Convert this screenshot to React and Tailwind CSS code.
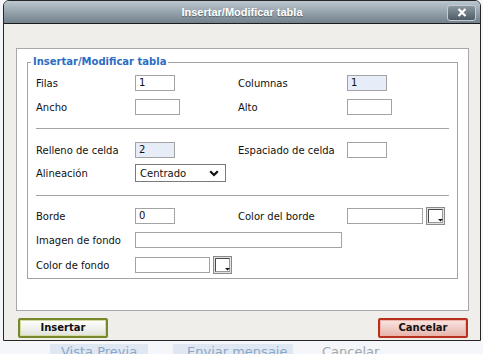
import React from 'react'

function Field({ w = 40, value = '', blue = false }) {
  return (
    <div
      className={
        'h-[16px] shrink-0 border border-[#a3a3a3] flex items-center pl-[3px] leading-none ' +
        (blue ? 'bg-[#e6edf9]' : 'bg-white')
      }
      style={{ width: w }}
    >
      {value}
    </div>
  )
}

function Picker() {
  return (
    <svg width="19" height="18" viewBox="0 0 19 18" className="ml-[3px] shrink-0">
      <rect x="0.5" y="0.5" width="18" height="17" fill="#e2e2e2" stroke="#8a8a8a" />
      <rect x="2.5" y="2.5" width="14" height="13" fill="#fff" stroke="#9a9a9a" />
      <path d="M2.5 15.5 V2.5 H16.5" fill="none" stroke="#4a4a4a" />
      <path d="M12 12 H17 L14.5 14.5 Z" fill="#111" />
    </svg>
  )
}

function Row({ label, children, label2, children2, className = '' }) {
  return (
    <div className={'flex items-center h-[16px] ' + className}>
      <div className="w-[99px] shrink-0 whitespace-nowrap">{label}</div>
      <div className="w-[103px] shrink-0 flex items-center">{children}</div>
      {label2 && <div className="w-[109px] shrink-0 whitespace-nowrap">{label2}</div>}
      {children2 && <div className="flex items-center">{children2}</div>}
    </div>
  )
}

export default function App() {
  return (
    <div className="w-[483px] h-[354px] overflow-hidden bg-[#f4f6f9] font-['DejaVu_Sans',sans-serif] text-[10px] text-[#111]">
      <div className="ml-[3px] w-[478px] h-[341px] flex flex-col rounded-t-[6px] border border-[#262626] bg-[#efeeea] overflow-hidden">
        {/* title bar */}
        <div className="h-[23px] shrink-0 border-b border-[#1c1c1c] bg-gradient-to-b from-[#bcc8d0] to-[#72818d] grid grid-cols-[1fr_auto_1fr] items-center">
          <div />
          <span className="font-['Liberation_Sans',sans-serif] font-bold text-[11px] text-white [text-shadow:0_1px_1px_rgba(0,0,0,0.35)]">
            Insertar/Modificar tabla
          </span>
          <div className="flex justify-end pr-[4px] pt-[1px]">
            <div className="w-[29px] h-[16px] rounded-[3px] border border-[#c4ccd2] bg-gradient-to-b from-[#8a98a2] to-[#4f5c66] flex items-center justify-center">
              <svg width="10" height="9" viewBox="0 0 10 9">
                <path d="M1.5 1 L8.5 8 M8.5 1 L1.5 8" stroke="#fff" strokeWidth="2.2" />
              </svg>
            </div>
          </div>
        </div>

        {/* panel */}
        <div className="mt-[24px] ml-[12px] w-[453px] h-[263px] shrink-0 border border-[#a8a8a8] bg-white">
          <fieldset className="mt-[6px] mx-[10px] h-[224px] border border-[#a3a3a3]">
            <legend className="ml-[3px] px-[2px] leading-[14px] font-bold text-[#2b6cc4]">Insertar/Modificar tabla</legend>
            <div className="px-[8px]">
              <Row
                className="mt-[6px]"
                label="Filas"
                label2="Columnas"
                children={<Field value="1" />}
                children2={<Field value="1" blue />}
              />
              <Row
                className="mt-[8px]"
                label="Ancho"
                label2="Alto"
                children={<Field w={45} />}
                children2={<Field w={45} />}
              />
              <div className="mt-[13px] h-px bg-[#a3a3a3]" />
              <Row
                className="mt-[13px]"
                label="Relleno de celda"
                label2="Espaciado de celda"
                children={<Field value="2" blue />}
                children2={<Field />}
              />
              <div className="mt-[6px] flex items-center h-[18px]">
                <div className="w-[99px] shrink-0">Alineación</div>
                <div className="w-[91px] h-[18px] border border-[#7a7a7a] bg-white flex items-center justify-between pl-[4px] pr-[6px]">
                  <span>Centrado</span>
                  <svg width="10" height="7" viewBox="0 0 10 7">
                    <path d="M1.2 1.2 L5 5 L8.8 1.2" fill="none" stroke="#111" strokeWidth="2.2" />
                  </svg>
                </div>
              </div>
              <div className="mt-[13px] h-px bg-[#a3a3a3]" />
              <Row
                className="mt-[12px]"
                label="Borde"
                label2="Color del borde"
                children={<Field value="0" />}
                children2={
                  <>
                    <Field w={76} />
                    <Picker />
                  </>
                }
              />
              <div className="mt-[8px] flex items-center h-[16px]">
                <div className="w-[99px] shrink-0">Imagen de fondo</div>
                <Field w={207} />
              </div>
              <div className="mt-[9px] flex items-center h-[16px]">
                <div className="w-[99px] shrink-0">Color de fondo</div>
                <Field w={75} />
                <Picker />
              </div>
            </div>
          </fieldset>
        </div>

        {/* buttons */}
        <div className="mt-[7px] flex justify-between pl-[14px] pr-[12px]">
          <button className="w-[90px] h-[20px] rounded-[2px] border-2 border-[#76882a] shadow-[inset_0_0_0_1px_#d3dca0] bg-gradient-to-b from-white to-[#e3e3dc] font-bold text-[10px] leading-none">
            Insertar
          </button>
          <button className="w-[90px] h-[20px] rounded-[2px] border-2 border-[#b8301e] shadow-[inset_0_0_0_1px_#eeb2a8] bg-gradient-to-b from-[#fae6e2] to-[#e6b4ad] font-bold text-[10px] leading-none">
            Cancelar
          </button>
        </div>
      </div>

      {/* page behind the dialog */}
      <div className="h-[13px] flex items-start text-[13px] leading-[16px] pt-[3px]">
        <div className="ml-[50px] w-[98px] h-[16px] bg-[#dfe8f2] text-[#8aa6c8] pl-[11px]">Vista Previa</div>
        <div className="ml-[25px] w-[120px] h-[16px] bg-[#dfe8f2] text-[#8aa6c8] pl-[14px]">Enviar mensaje</div>
        <div className="ml-[29px] text-[#a0a6ad]">Cancelar</div>
      </div>
    </div>
  )
}
